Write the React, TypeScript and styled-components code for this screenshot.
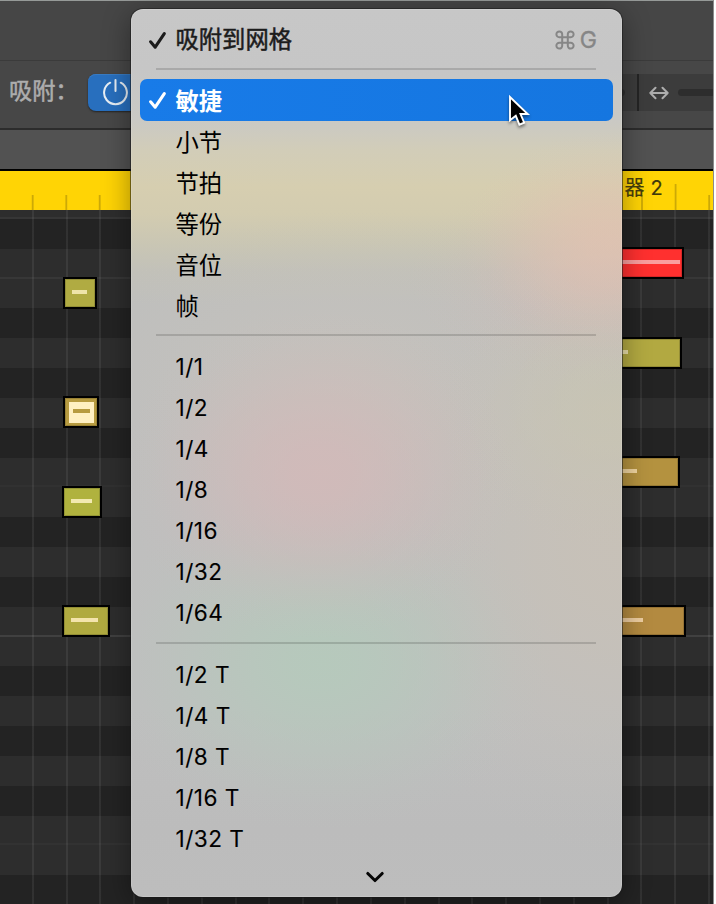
import React from "react";
import styled, { createGlobalStyle, css } from "styled-components";

const GlobalStyle = createGlobalStyle`
  * { box-sizing: border-box; }
  body {
    margin: 0;
    background: #ffffff;
    font-family: Inter, "Noto Sans CJK SC", sans-serif;
  }
`;

const Window = styled.main`
  position: relative;
  width: 714px;
  height: 904px;
  overflow: hidden;
  display: flex;
  flex-direction: column;
  background: #2d2d2d;
  border-right: 1px solid #8b8b8b;
`;

const HeaderStrip = styled.div`
  height: 61px;
  flex: none;
  background: #464646;
  border-top: 1px solid #969a98;
  border-bottom: 1px solid #3b3b3b;
`;

const Toolbar = styled.div`
  height: 69px;
  flex: none;
  display: flex;
  justify-content: space-between;
  padding: 13px 0 17px 9px;
  background: #474747;
  border-bottom: 2px solid #2c2c2c;
`;

const ToolbarGroup = styled.div`
  display: flex;
  height: 37px;
`;

const SnapLabel = styled.span`
  width: 79px;
  line-height: 34px;
  font-size: 23.2px;
  color: #adadad;
  -webkit-text-stroke: 0.5px #adadad;
  white-space: nowrap;
`;

const PowerButton = styled.button`
  width: 60px;
  height: 37px;
  padding: 0 0 0 15px;
  border: 0;
  border-radius: 8px;
  display: flex;
  align-items: center;
  background: #286fbe;
  box-shadow: 0 1px 2px rgba(0, 0, 0, 0.5), inset 0 1px 0 #397bc2;
`;

const SliderCell = styled.div<{ $width: number }>`
  width: ${(p) => p.$width}px;
  display: flex;
  align-items: center;
  background: #3c3c3c;
  & + & {
    border-left: 2px solid #242424;
    padding-left: 10px;
    gap: 9px;
  }
`;

const SliderTrack = styled.div<{ $width: number; $end?: boolean }>`
  width: ${(p) => p.$width}px;
  height: 7px;
  background: #2d2d2d;
  border-radius: ${(p) => (p.$end ? "0 4px 4px 0" : "4px 0 0 4px")};
`;

const InfoStrip = styled.div`
  height: 41px;
  flex: none;
  background: #525252;
  border-bottom: 2px solid #000;
`;

const RegionRuler = styled.div`
  height: 39px;
  flex: none;
  display: flex;
  justify-content: flex-end;
  padding-right: 50px;
  background: #ffd405;
`;

const RegionName = styled.span`
  position: relative;
  z-index: 1;
  line-height: 34px;
  font-size: 20px;
  letter-spacing: 0.2px;
  white-space: pre;
  color: #40390b;
  -webkit-text-stroke: 0.2px #40390b;
`;

const RulerTicks = styled.svg`
  position: absolute;
  left: 0;
  top: 171px;
`;

const Lanes = styled.div`
  position: relative;
  flex: 1;
  display: flex;
  flex-direction: column;
`;

const Lane = styled.div<{ $dark?: boolean; $line?: string; $height?: number }>`
  height: ${(p) => p.$height ?? 29.83}px;
  flex: none;
  background: ${(p) => (p.$dark ? "#232323" : "#2d2d2d")};
  ${(p) => p.$line && css`border-bottom: 2px solid ${p.$line};`}
`;

const BarLines = styled.div`
  position: absolute;
  inset: 0;
  background: repeating-linear-gradient(
    to right,
    rgba(255, 255, 255, 0.065) 0 2px,
    transparent 2px 33.82px
  );
  background-position: -2.1px 0;
  background-size: 2000px 100%;
`;

const Note = styled.div<{
  $x: number; $y: number; $w: number; $color: string;
}>`
  position: absolute;
  left: ${(p) => p.$x}px;
  top: ${(p) => p.$y}px;
  width: ${(p) => p.$w}px;
  height: 32px;
  display: flex;
  align-items: center;
  padding: 0 7px 2px;
  background: ${(p) => p.$color};
  border: 2px solid #000;
  box-shadow: inset 0 0 0 1px rgba(0, 0, 0, 0.16);
`;

const Velocity = styled.div<{ $w: number; $color: string }>`
  width: ${(p) => p.$w}px;
  height: 4px;
  flex: none;
  background: ${(p) => p.$color};
`;

const SelectedCore = styled.div`
  margin: 2px 0 0 -3px;
  width: 25px;
  height: 21px;
  flex: none;
  display: flex;
  align-items: center;
  padding: 0 0 2px 4px;
  background: #fff0c2;
`;

const BottomEdge = styled.div`
  position: absolute;
  left: 0;
  right: 0;
  bottom: 0;
  height: 1px;
  background: #120f11;
`;

/* Soft colour pool with an eased falloff, so the centre has no visible peak. */
const pool = (size: string, at: string, rgb: string, a: number) =>
  `radial-gradient(ellipse ${size} at ${at}, rgba(${rgb}, ${a}) 0%, rgba(${rgb}, ${a * 0.93}) 15%,
    rgba(${rgb}, ${a * 0.75}) 32%, rgba(${rgb}, ${a * 0.5}) 50%, rgba(${rgb}, ${a * 0.25}) 68%,
    rgba(${rgb}, ${a * 0.07}) 85%, rgba(${rgb}, 0) 100%)`;

const Menu = styled.div`
  position: absolute;
  left: 131px;
  top: 9px;
  width: 491px;
  height: 888px;
  padding-top: 10px;
  border-radius: 12px;
  display: flex;
  flex-direction: column;
  background:
    ${pool("150px 110px", "480px 232px", "228, 194, 176", 0.65)},
    ${pool("190px 110px", "465px 266px", "215, 189, 180", 0.5)},
    ${pool("200px 165px", "188px 466px", "213, 184, 184", 0.75)},
    ${pool("230px 170px", "190px 653px", "179, 204, 187", 0.75)},
    ${pool("170px 140px", "480px 400px", "201, 198, 176", 0.6)},
    ${pool("270px 320px", "491px 530px", "200, 193, 183", 0.9)},
    ${pool("300px 180px", "220px 380px", "200, 195, 188", 0.6)},
    linear-gradient(#c7c7c7 0, #c6c6c6 60px, #cac9c4 112px, #d2cdb8 142px, #d6ceb0 178px,
      #d3ccb0 204px, #c9c6b4 236px, #c2c1b9 262px, #bfbfbd 296px, #bfbfbf 700px,
      #bcbcbc 820px, #bdbdbd 888px);
  box-shadow: 0 0 0 1px rgba(25, 25, 25, 0.55), inset 0 0 0 1px rgba(255, 255, 255, 0.13),
    0 6px 28px rgba(0, 0, 0, 0.4);
`;

const MenuItem = styled.div<{ $selected?: boolean; $medium?: boolean }>`
  height: 41.1px;
  flex: none;
  margin: 0 9px;
  padding: 0 16px 0 8px;
  display: flex;
  align-items: center;
  border-radius: 7px;
  font-size: 23.3px;
  color: #000;
  white-space: pre;
  ${(p) => p.$medium && css`color: #1c1c1c; -webkit-text-stroke: 0.5px #1c1c1c;`}
  ${(p) => p.$selected && css`
    background: linear-gradient(to right, #187be8, #1576e0);
    color: #fff;
    font-weight: 700;
  `}
`;

const CheckSlot = styled.span`
  width: 27.5px;
  height: 24px;
  flex: none;
`;

const ItemText = styled.span<{ $latin?: boolean; $first?: boolean }>`
  padding-top: ${(p) => (p.$latin || p.$first ? 0 : 3)}px;
  line-height: 38px;
  ${(p) => p.$latin && css`
    font-size: 22.6px;
    letter-spacing: 0.48px;
    -webkit-text-stroke: 0.1px #000;
  `}
`;

const Shortcut = styled.span`
  margin-left: auto;
  display: flex;
  align-items: center;
  gap: 5px;
  font-size: 23px;
  color: #868686;
  -webkit-text-stroke: 0.4px #868686;
`;

const Separator = styled.div<{ $before: number; $after: number }>`
  height: 2px;
  flex: none;
  margin: ${(p) => p.$before}px 26px ${(p) => p.$after}px 25px;
  background: rgba(0, 0, 0, 0.145);
`;

const MoreItems = styled.div`
  display: flex;
  justify-content: center;
  padding: 10px 4px 0 0;
`;

const Pointer = styled.svg`
  position: absolute;
  left: 505px;
  top: 91px;
  filter: drop-shadow(0 2px 1.5px rgba(0, 0, 0, 0.45));
`;

const Check = () => (
  <svg width="20" height="20" viewBox="0 0 20 20" fill="none">
    <path d="M2.6 10.8 7.2 16.2 16.3 2.6" stroke="currentColor" strokeWidth="3.1"
      strokeLinecap="round" strokeLinejoin="round" />
  </svg>
);

const CommandIcon = () => (
  <svg width="20" height="20" viewBox="0 0 20 20" fill="none" stroke="currentColor" strokeWidth="2">
    <path d="M7.2 7.2V4.4a2.9 2.9 0 1 0-2.9 2.8h11.4a2.9 2.9 0 1 0-2.9-2.8v11.2a2.9 2.9 0 1 0 2.9-2.8H4.3a2.9 2.9 0 1 0 2.9 2.8V7.2" />
  </svg>
);

const PowerIcon = () => (
  <svg width="25" height="29" viewBox="0 0 25 29" fill="none" stroke="#e8eff5"
    strokeWidth="2" strokeLinecap="round">
    <path d="M12.5 2v11M7.2 4.7a11.4 11.4 0 1 0 10.6 0" />
  </svg>
);

const ResizeIcon = () => (
  <svg width="20" height="14" viewBox="0 0 20 14" fill="none" stroke="#adadad"
    strokeWidth="2" strokeLinecap="round" strokeLinejoin="round">
    <path d="M1.3 7h17.4M6.5 1.7 1.3 7l5.2 5.3M13.5 1.7 18.7 7l-5.2 5.3" />
  </svg>
);

const lanes: { dark?: boolean; line?: string; height?: number }[] = [
  { height: 9, line: "#363636" },
  { dark: true }, { line: "#373737" }, {}, { dark: true }, {}, { dark: true }, {},
  { dark: true }, { line: "#313131" }, {}, { dark: true }, {}, { dark: true },
  { line: "#404040" }, {}, { dark: true }, {}, { dark: true }, {}, { dark: true },
  { line: "#323232" }, {}, { dark: true },
];

const notes = [
  { x: 63, y: 67, w: 34, color: "#b0ab42", line: 15, pale: "#eee4a8" },
  { x: 62, y: 276, w: 40, color: "#b0b23e", line: 21, pale: "#f2e9b0" },
  { x: 62, y: 395, w: 48, color: "#b0aa40", line: 27, pale: "#f3e4ac" },
  { x: 560, y: 37, w: 124, color: "#ff302f", line: 111, pale: "#fa9e9e" },
  { x: 560, y: 127, w: 122, color: "#b2a941", line: 59, pale: "#eadfa9" },
  { x: 560, y: 246, w: 120, color: "#b4923f", line: 68, pale: "#efd49f" },
  { x: 560, y: 395, w: 126, color: "#b38a40", line: 74, pale: "#edcda0" },
];

const noteValues = ["1/1", "1/2", "1/4", "1/8", "1/16", "1/32", "1/64"];
const triplets = ["1/2 T", "1/4 T", "1/8 T", "1/16 T", "1/32 T"];

function Item({ text, latin }: { text: string; latin?: boolean }) {
  return (
    <MenuItem>
      <CheckSlot />
      <ItemText $latin={latin}>{text}</ItemText>
    </MenuItem>
  );
}

export default function App() {
  return (
    <Window>
      <GlobalStyle />
      <HeaderStrip />
      <Toolbar>
        <ToolbarGroup>
          <SnapLabel>吸附：</SnapLabel>
          <PowerButton aria-label="吸附"><PowerIcon /></PowerButton>
        </ToolbarGroup>
        <ToolbarGroup>
          <SliderCell $width={37}><SliderTrack $width={25} $end /></SliderCell>
          <SliderCell $width={76}>
            <ResizeIcon />
            <SliderTrack $width={35} />
          </SliderCell>
        </ToolbarGroup>
      </Toolbar>
      <InfoStrip />
      <RegionRuler>
        <RegionName>器 2</RegionName>
      </RegionRuler>
      <RulerTicks width="713" height="39" stroke="#cca907" strokeWidth="1.8">
        <path d="M32.7 24v15M66.3 24v15M99.7 24v15M642 24v15M675.6 13v26M709.2 24v15" />
      </RulerTicks>
      <Lanes>
        {lanes.map((l, i) => (
          <Lane key={i} $dark={l.dark} $line={l.line} $height={l.height} />
        ))}
        <BarLines />
        {notes.map((n, i) => (
          <Note key={i} $x={n.x} $y={n.y} $w={n.w} $color={n.color}>
            <Velocity $w={n.line} $color={n.pale} />
          </Note>
        ))}
        <Note $x={63} $y={186} $w={36} $color="#b79b40">
          <SelectedCore><Velocity $w={17} $color="#b79b40" /></SelectedCore>
        </Note>
        <BottomEdge />
      </Lanes>

      <Menu>
        <MenuItem $medium>
          <CheckSlot><Check /></CheckSlot>
          <ItemText $first>吸附到网格</ItemText>
          <Shortcut><CommandIcon />G</Shortcut>
        </MenuItem>
        <Separator $before={8} $after={9.4} />
        <MenuItem $selected>
          <CheckSlot><Check /></CheckSlot>
          <ItemText>敏捷</ItemText>
        </MenuItem>
        {["小节", "节拍", "等份", "音位", "帧"].map((t) => <Item key={t} text={t} />)}
        <Separator $before={8.4} $after={9.8} />
        {noteValues.map((t) => <Item key={t} text={t} latin />)}
        <Separator $before={8.6} $after={9.8} />
        {triplets.map((t) => <Item key={t} text={t} latin />)}
        <MoreItems>
          <svg width="20" height="14" viewBox="0 0 20 14" fill="none">
            <path d="m2.8 3.5 7.2 7 7.2-7" stroke="#050505" strokeWidth="3.1"
              strokeLinecap="round" strokeLinejoin="round" />
          </svg>
        </MoreItems>
      </Menu>

      <Pointer width="28" height="38" viewBox="0 0 28 38">
        <path d="M5 6v23.3l5.8-4.5 3.6 8.9 4.8-2-3.7-8.7h7.2z" fill="#000"
          stroke="#fff" strokeWidth="1.9" strokeLinejoin="miter" />
      </Pointer>
    </Window>
  );
}
